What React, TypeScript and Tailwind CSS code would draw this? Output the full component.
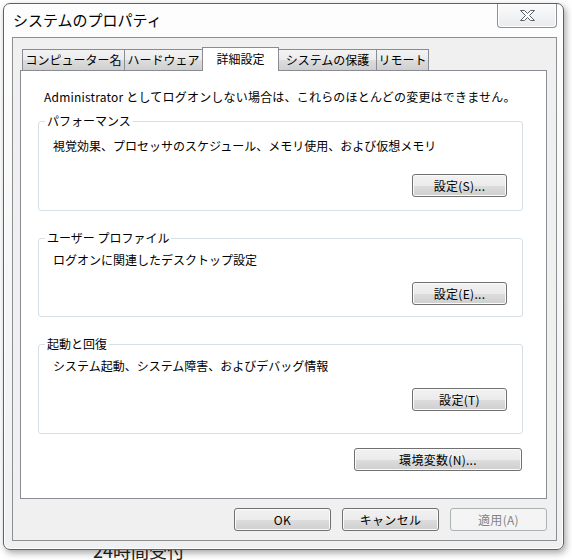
import clsx from "clsx";

const btnFace =
  "border-[#707070] bg-[linear-gradient(#f2f2f2_0%,#ebebeb_50%,#dddddd_51%,#cfcfcf_100%)] text-black shadow-[inset_0_0_0_1px_#fbfbfb]";

function Btn({
  label,
  className = "",
  disabled = false,
}: {
  label: string;
  className?: string;
  disabled?: boolean;
}) {
  return (
    <button
      className={clsx(
        "flex h-[23px] items-center justify-center rounded-[3px] border text-[12px] leading-none tracking-[0.3px]",
        disabled
          ? "border-[#adb2b5] bg-[#f4f4f4] text-[#838383]"
          : btnFace,
        className
      )}
    >
      {label}
    </button>
  );
}

function Tab({ label, w, active = false }: { label: string; w: string; active?: boolean }) {
  return (
    <div
      className={clsx(
        "-ml-px flex items-center justify-center border border-b-0 border-[#898c95] text-[12px] leading-none first:ml-0",
        w,
        active
          ? "relative z-10 -mb-px h-[24px] bg-white pb-[2px]"
          : "h-[21px] bg-[linear-gradient(#f3f3f3_0%,#ebebeb_50%,#dddddd_51%,#cfcfcf_100%)]"
      )}
    >
      {label}
    </div>
  );
}

function Group({
  title,
  text,
  button,
  className,
}: {
  title: string;
  text: string;
  button: string;
  className: string;
}) {
  return (
    <div className={clsx("relative rounded-[3px] border border-[#d5dfe5] pl-[14px] pr-[15px]", className)}>
      <span className="absolute -top-[9px] left-[6px] bg-white px-[2px] text-[12px] leading-[16px]">
        {title}
      </span>
      <div className="text-[12px] leading-[16px]">{text}</div>
      <div className="flex justify-end">
        <Btn label={button} className="w-[95px]" />
      </div>
    </div>
  );
}

export default function App() {
  return (
    <div className="relative h-[560px] w-[572px] overflow-hidden bg-white font-['Noto_Sans_CJK_JP',sans-serif] text-black">
      <div className="absolute left-[93px] top-[541px] text-[18px] leading-none text-[#222]">24時間受付</div>

      <div className="relative z-10 ml-[3px] mt-[3px] flex h-[547px] w-[561px] flex-col rounded-[7px] border border-[#5d6064] bg-[linear-gradient(#fdfdfd,#eef0f2)] shadow-[2px_3px_7px_rgba(0,0,0,0.35),inset_0_0_0_1px_#ffffff]">
        {/* title bar */}
        <div className="flex h-[33px] items-start justify-between pl-[9px] pr-[6px]">
          <div className="mt-[6px] text-[15px] leading-[20px]">システムのプロパティ</div>
          <div className="flex h-[24px] w-[60px] items-center justify-center rounded-b-[4px] border border-t-0 border-[#8d9097] bg-[linear-gradient(#fbfbfb,#e9ebee)] shadow-[inset_0_0_0_1px_#ffffff]">
            <svg width="17" height="13" viewBox="0 0 17 13">
              <path
                d="M1.5 1.5h4l3 3 3-3h4l-5 5 5 5h-4l-3-3-3 3h-4l5-5z"
                fill="#ffffff"
                stroke="#5b6069"
                strokeWidth="1"
                strokeLinejoin="round"
              />
            </svg>
          </div>
        </div>

        {/* client */}
        <div className="ml-[8px] flex h-[504px] w-[545px] flex-col border border-[#8e8f91] bg-[#f0f0f0] pl-[7px] pt-[9px]">
          <div className="relative z-10 ml-[2px] flex h-[23px] items-end">
            <Tab label="コンピューター名" w="w-[103px]" />
            <Tab label="ハードウェア" w="w-[79px]" />
            <Tab label="詳細設定" w="w-[77px]" active />
            <Tab label="システムの保護" w="w-[99px]" />
            <Tab label="リモート" w="w-[53px]" />
          </div>

          <div className="flex h-[429px] w-[527px] flex-col border border-[#898c95] bg-white pl-[17px] pr-[23px] pt-[18px]">
            <div className="ml-[6px] text-[12px] leading-[16px] tracking-[0.2px]">
              Administrator としてログオンしない場合は、これらのほとんどの変更はできません。
            </div>

            <Group
              title="パフォーマンス"
              text="視覚効果、プロセッサのスケジュール、メモリ使用、および仮想メモリ"
              button="設定(S)..."
              className="mt-[16px] h-[90px] pt-[16px] [&>div:last-child]:mt-[20px]"
            />
            <Group
              title="ユーザー プロファイル"
              text="ログオンに関連したデスクトップ設定"
              button="設定(E)..."
              className="mt-[27px] h-[79px] pt-[13px] [&>div:last-child]:mt-[14px]"
            />
            <Group
              title="起動と回復"
              text="システム起動、システム障害、およびデバッグ情報"
              button="設定(T)"
              className="mt-[27px] h-[90px] pt-[13px] [&>div:last-child]:mt-[14px]"
            />

            <div className="mt-[14px] flex justify-end pr-px">
              <Btn label="環境変数(N)..." className="w-[168px]" />
            </div>
          </div>

          <div className="mt-[9px] flex justify-end gap-[11px] pr-[9px]">
            <Btn label="OK" className="w-[97px]" />
            <Btn label="キャンセル" className="w-[97px]" />
            <Btn label="適用(A)" className="w-[97px]" disabled />
          </div>
        </div>
      </div>
    </div>
  );
}
